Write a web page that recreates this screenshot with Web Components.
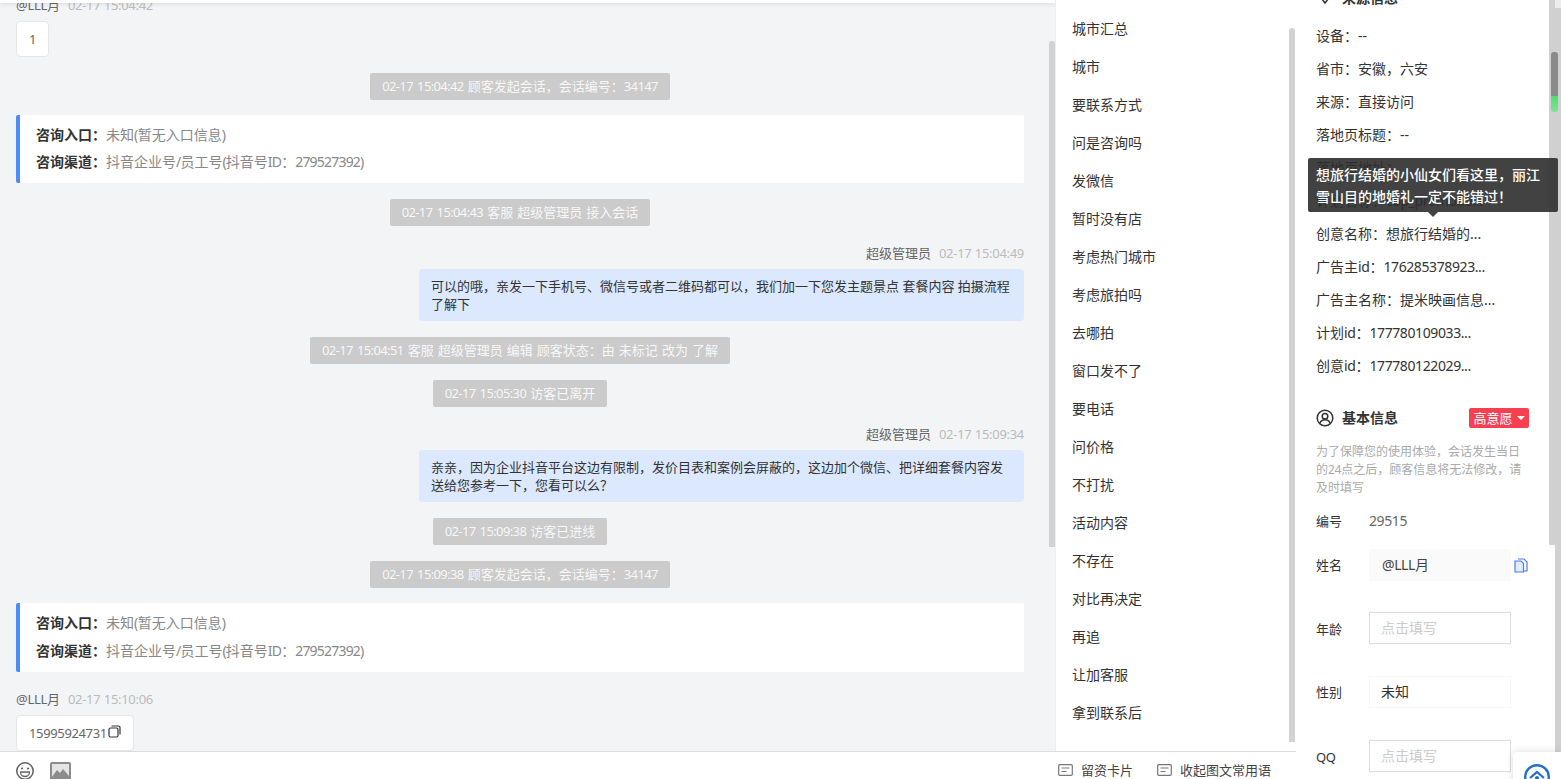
<!DOCTYPE html>
<html lang="zh"><head><meta charset="utf-8"><title>会话</title>
<style>
html,body{margin:0;padding:0;height:100%;overflow:hidden}
body{font:13px/18px "Noto Sans","Noto Sans CJK SC",sans-serif;color:#333;background:#fff}
.l{letter-spacing:var(--ls,-.3px)}
</style></head><body>
<app-shell>
  <chat-pane>
    <chat-msg who="@LLL月" time="02-17 15:04:42"><text-bubble>1</text-bubble></chat-msg>
    <sys-pill>02-17 15:04:42 顾客发起会话，会话编号：34147</sys-pill>
    <entry-card style="margin-top:-1px" channel="抖音企业号/员工号(抖音号ID：279527392)"></entry-card>
    <sys-pill>02-17 15:04:43 客服 超级管理员 接入会话</sys-pill>
    <chat-msg side="right" who="超级管理员" time="02-17 15:04:49"><blue-bubble>可以的哦，亲发一下手机号、微信号或者二维码都可以，我们加一下您发主题景点 套餐内容 拍摄流程了解下</blue-bubble></chat-msg>
    <sys-pill>02-17 15:04:51 客服 超级管理员 编辑 顾客状态：由 未标记 改为 了解</sys-pill>
    <sys-pill>02-17 15:05:30 访客已离开</sys-pill>
    <chat-msg side="right" who="超级管理员" time="02-17 15:09:34"><blue-bubble>亲亲，因为企业抖音平台这边有限制，发价目表和案例会屏蔽的，这边加个微信、把详细套餐内容发送给您参考一下，您看可以么？</blue-bubble></chat-msg>
    <sys-pill>02-17 15:09:38 访客已进线</sys-pill>
    <sys-pill>02-17 15:09:38 顾客发起会话，会话编号：34147</sys-pill>
    <entry-card style="margin-top:-1px;height:69px;--lh:28px" channel="抖音企业号/员工号(抖音号ID：279527392)"></entry-card>
    <chat-msg who="@LLL月" time="02-17 15:10:06"><text-bubble copy>15995924731</text-bubble></chat-msg>
  </chat-pane>
  <quick-list>
    <quick-item>城市汇总</quick-item><quick-item>城市</quick-item><quick-item>要联系方式</quick-item><quick-item>问是咨询吗</quick-item><quick-item>发微信</quick-item><quick-item>暂时没有店</quick-item><quick-item>考虑热门城市</quick-item><quick-item>考虑旅拍吗</quick-item><quick-item>去哪拍</quick-item><quick-item>窗口发不了</quick-item><quick-item>要电话</quick-item><quick-item>问价格</quick-item><quick-item>不打扰</quick-item><quick-item>活动内容</quick-item><quick-item>不存在</quick-item><quick-item>对比再决定</quick-item><quick-item>再追</quick-item><quick-item>让加客服</quick-item><quick-item>拿到联系后</quick-item>
  </quick-list>
  <tool-bar></tool-bar>
  <info-panel>
    <info-head icon="pin" style="margin-top:-12px;margin-bottom:11px"><span>来源信息</span><svg slot="end" width="12" height="14" viewBox="0 0 12 14" fill="none" stroke="#333" stroke-width="1.4"><rect x="1" y="-6" width="10" height="10" rx="2"/></svg></info-head>
    <info-row>设备：--</info-row><info-row>省市：安徽，六安</info-row><info-row>来源：直接访问</info-row><info-row>落地页标题：--</info-row><info-row>落地页地址：</info-row><info-row>计划名称：cop_promotio...</info-row><info-row>创意名称：想旅行结婚的...</info-row><info-row>广告主id：176285378923...</info-row><info-row>广告主名称：提米映画信息...</info-row><info-row>计划id：177780109033...</info-row><info-row>创意id：177780122029...</info-row>
    <info-head icon="user" style="margin-top:26px;margin-bottom:15px"><span>基本信息</span><intent-tag slot="end">高意愿</intent-tag></info-head>
    <info-note>为了保障您的使用体验，会话发生当日的24点之后，顾客信息将无法修改，请及时填写</info-note>
    <field-row label="编号" kind="plain" style="margin-top:14px">29515</field-row>
    <field-row label="姓名" kind="filled" copy style="margin-top:18px">@LLL月</field-row>
    <field-row label="年龄" kind="input" style="margin-top:31px">点击填写</field-row>
    <field-row label="性别" kind="select" style="margin-top:32px">未知</field-row>
    <field-row label="QQ" kind="input" style="margin-top:32px">点击填写</field-row>
    <hover-tip>想旅行结婚的小仙女们看这里，丽江雪山目的地婚礼一定不能错过！</hover-tip>
    <panel-rail></panel-rail>
    <float-widget></float-widget>
  </info-panel>
</app-shell>
<script>
const RUN=/[0-9A-Za-z@\-.:_\/()]+/g;
const lat=s=>s.replace(RUN,m=>'<span class="l">'+m+'</span>');
(function wrap(root){
  const w=document.createTreeWalker(root,NodeFilter.SHOW_TEXT),ns=[];
  while(w.nextNode()){const n=w.currentNode;if(n.parentNode.tagName!=='SCRIPT'&&n.parentNode.tagName!=='STYLE'&&/[0-9A-Za-z@]/.test(n.nodeValue))ns.push(n);}
  ns.forEach(n=>{const t=document.createElement('template');t.innerHTML=lat(n.nodeValue);n.replaceWith(t.content);});
})(document.body);
const LC='.l{letter-spacing:var(--ls,-.3px)}';
function def(name, css, html){
  customElements.define(name, class extends HTMLElement{
    constructor(){super();this.attachShadow({mode:'open'});}
    connectedCallback(){
      const a=n=>this.getAttribute(n)||'';
      const h=typeof html==='function'?html(a,this):html;
      this.shadowRoot.innerHTML='<style>'+LC+css+'</style>'+h;
    }
  });
}
def('app-shell',`:host{display:grid;grid-template-columns:1055px 241px 265px;grid-template-rows:751px 28px;height:779px;overflow:hidden;position:relative}
 ::slotted(info-panel){grid-column:3;grid-row:1/3}
 ::slotted(tool-bar){grid-column:1/3;grid-row:2}`,'<slot></slot>');
def('chat-pane',`:host{display:block;position:relative;background:#f3f4f6;overflow:hidden;height:751px}
 .in{display:flex;flex-direction:column;gap:16px;padding:0 31px 0 16px;margin-top:-6px}
 .top{position:absolute;left:0;right:0;top:0;height:3px;background:#fff;box-shadow:0 1px 4px rgba(0,0,0,.12)}
 .th{position:absolute;left:1049px;top:41px;width:6px;height:506px;background:#d2d2d2;border-radius:3px 3px 0 0}`,
 '<div class="in"><slot></slot></div><div class="top"></div><div class="th"></div>');
def('chat-msg',`:host{display:flex;flex-direction:column;align-items:flex-start;--ls:-.3px}
 :host([side=right]){align-items:flex-end}
 .h{height:22px;line-height:22px;margin-bottom:5px;color:#666;white-space:nowrap}
 .t{color:#bbb;margin-left:8px}`,
 a=>`<div class="h">${lat(a('who'))}<span class="t">${lat(a('time'))}</span></div><slot></slot>`);
def('text-bubble',`:host{display:flex;align-items:center;height:36px;box-sizing:border-box;padding:0 12px;background:#fff;border:1px solid #e6e6e6;border-radius:4px;color:#666;line-height:34px;--ls:-.36px}
 svg{display:block;margin-left:1px;margin-top:-4px}`,
 (a,e)=>'<slot></slot>'+(e.hasAttribute('copy')?'<svg width="13" height="13" viewBox="0 0 13 13" fill="none" stroke="#333" stroke-width="1.2"><rect x="1" y="3" width="9" height="9" rx="1.5"/><path d="M3.5 1h7a1.5 1.5 0 0 1 1.5 1.500v7"/></svg>':''));
def('blue-bubble',`:host{display:block;box-sizing:border-box;width:605px;padding:8px 12px;background:#dbe8fd;border-radius:4px;color:#333;line-height:18px}`,'<slot></slot>');
def('sys-pill',`:host{display:block;align-self:center;height:27px;line-height:27px;padding:0 12px;background:#cbcbcb;color:rgba(255,255,255,.88);border-radius:2px;white-space:nowrap;--ls:-.62px;word-spacing:.67px}`,'<slot></slot>');
def('entry-card',`:host{display:block;box-sizing:border-box;height:68px;padding:6px 16px;background:#fff;border-left:4px solid #4d8cf5;border-radius:2px;line-height:var(--lh,27px);font-size:14px;color:#888;--ls:-.4px}
 b{color:#333;font-weight:700}
 .c{--ls:-.8px}`,a=>`<div><b>咨询入口：</b>未知${lat('(')}暂无入口信息${lat(')')}</div><div class="c"><b>咨询渠道：</b>${lat(a('channel'))}</div>`);
def('quick-list',`:host{display:block;position:relative;box-sizing:border-box;background:#fff;border-left:1px solid #eee;padding:10px 0 0 16px;height:751px;overflow:hidden}
 .th{position:absolute;left:233px;top:28px;width:6px;height:714px;background:#d2d2d2;border-radius:3px 3px 0 0}`,'<slot></slot><div class="th"></div>');
def('quick-item',`:host{display:block;height:38px;line-height:38px;font-size:14px;color:#333;white-space:nowrap}`,'<slot></slot>');
def('tool-bar',`:host{display:flex;align-items:flex-start;box-sizing:border-box;height:28px;background:#fff;border-top:1px solid #ddd;overflow:hidden}
 .l2{display:flex;gap:15px;margin:9px 0 0 15px;align-items:center}
 .r{display:flex;margin:9px 25px 0 auto;gap:24px;color:#444}
 .i{display:flex;align-items:center;gap:8px;white-space:nowrap;height:28px;line-height:28px;margin-top:-5px}
 svg{display:block;flex:none}`,
 ()=>{const doc='<svg width="15" height="12" viewBox="0 0 15 12" fill="none" stroke="#777" stroke-width="1.2"><rect x=".7" y=".7" width="13.600" height="10.600" rx="1"/><path d="M3.500 4h8M3.500 7.500h5"/></svg>';
 return `<div class="l2"><svg width="20" height="20" viewBox="0 0 20 20" fill="none" stroke="#666" stroke-width="1.6"><circle cx="10" cy="10" r="8.200"/><circle cx="7" cy="7.500" r="1.100" fill="#666" stroke="none"/><circle cx="13" cy="7.500" r="1.100" fill="#666" stroke="none"/><path d="M5.500 11h9a4.500 4.500 0 0 1-9 0z" stroke-width="1.300"/></svg>
 <svg width="21" height="19" viewBox="0 0 21 19"><rect x="0" y="0" width="21" height="19" rx="2" fill="#8c8c8c"/><rect x="2" y="2" width="17" height="13" fill="#e4e4e4"/><path d="M2 15l5-7 3 3 3-4 6 7v4H2z" fill="#8c8c8c"/></svg></div>
 <div class="r"><div class="i">${doc}留资卡片</div><div class="i">${doc}收起图文常用语</div></div>`});
def('info-panel',`:host{display:block;position:relative;height:779px;background:#fff;overflow:hidden;box-sizing:border-box;padding:0 32px 0 20px}`,'<slot></slot>');
const ic={pin:'<svg width="18" height="18" viewBox="0 0 18 18" fill="none" stroke="#333" stroke-width="1.5"><path d="M2.500 5.500L9 14l6.500-8.500L12.500 2h-7z"/></svg>',
user:'<svg width="18" height="18" viewBox="0 0 18 18" fill="none" stroke="#333" stroke-width="1.5"><circle cx="9" cy="9" r="7.800"/><circle cx="9" cy="7.300" r="2.800"/><path d="M3.800 14.500c1-2.600 3-3.700 5.200-3.700s4.200 1.100 5.200 3.700"/></svg>'};
def('info-head',`:host{display:flex;align-items:center;height:20px;gap:8px;font-size:14px;font-weight:700;color:#333;white-space:nowrap}
 .e{margin-left:auto;display:flex;align-items:center}`,a=>`${ic[a('icon')]}<slot></slot><div class="e"><slot name="end"></slot></div>`);
def('intent-tag',`:host{display:flex;align-items:center;justify-content:center;gap:4px;width:60px;height:20px;background:#f6404f;color:#fff;border-radius:2px;font-size:13px;font-weight:400;line-height:20px}
 i{border:4px solid transparent;border-top-color:#fff;border-bottom:0;display:block}`,'<slot></slot><i></i>');
def('info-row',`:host{display:block;height:33px;line-height:33px;font-size:14px;color:#333;white-space:nowrap;--ls:-.4px}`,'<slot></slot>');
def('info-note',`:host{display:block;font-size:12px;line-height:18px;color:#aaa}`,'<slot></slot>');
def('field-row',`:host{display:flex;align-items:center;color:#333;position:relative;--ls:-.4px}
 .n{width:53px;flex:none}
 :host([kind=input]) .n{margin-top:2px}
 .b{box-sizing:border-box;width:142px;height:32px;line-height:30px;font-size:14px;padding:0 12px;flex:none;border:1px solid transparent}
 :host([kind=plain]){height:20px}
 :host([kind=plain]) .b{height:20px;line-height:20px;padding:0;color:#666;border:0}
 :host([kind=filled]) .b{background:#fafafa;padding-left:12px;color:#444}
 :host([kind=input]) .b{border-color:#ddd;color:#ccc;padding-left:11px}
 :host([kind=select]) .b{border-color:#f6f6f6;color:#333;padding-left:11px}
 svg{margin-left:3px;display:block;flex:none}`,
 (a,e)=>`<div class="n">${lat(a('label'))}</div><div class="b"><slot></slot></div>`+(e.hasAttribute('copy')?'<svg width="14" height="15" viewBox="0 0 14 15" fill="#fff" stroke="#4a7df0" stroke-width="1.2"><path d="M4 1h6l3 3v9H9"/><path d="M1 3h6l2.500 2.500V14H1z" fill="#e3ebfc"/></svg>':''));
def('hover-tip',`:host{position:absolute;left:12px;top:158px;width:250px;height:54px;box-sizing:border-box;padding:6px 8px;background:rgba(45,45,45,.9);color:#fff;font-size:14px;font-weight:500;line-height:22px;border-radius:2px;z-index:3}
 :host::after{content:"";position:absolute;left:120px;top:54px;border:5px solid transparent;border-top-color:rgba(45,45,45,.9);border-bottom:0}`,'<slot></slot>');
def('panel-rail',`:host{position:absolute;left:253px;top:0;width:12px;height:779px;background:#d0d0d0;z-index:1}
 .n{position:absolute;left:6px;top:0;width:6px;height:8px;background:#ececec}
 .w{position:absolute;left:0;top:545px;width:6px;bottom:0;background:#fff}
 .t{position:absolute;left:2px;top:52px;width:7px;height:60px;border-radius:3px;background:linear-gradient(#8a8a8a 0,#8a8a8a 73%,#52dc6e 73%,#7fe597 100%)}`,
 '<div class="n"></div><div class="w"></div><div class="t"></div>');
def('float-widget',`:host{position:absolute;left:217px;top:752px;width:48px;height:40px;background:#fff;border-radius:4px 0 0 0;box-shadow:0 0 8px rgba(0,0,0,.14);z-index:2;display:flex;justify-content:center;padding-top:12px;box-sizing:border-box}
 svg{display:block;flex:none}`,
 '<svg width="26" height="26" viewBox="0 0 26 26" fill="none"><circle cx="13" cy="13" r="11.800" stroke="#1f6fd0" stroke-width="2.400"/><path d="M6 14l7-6 7 6" stroke="#1f6fd0" stroke-width="2.200"/><circle cx="13" cy="14" r="2" fill="#1f6fd0"/></svg>');
</script>
</body></html>
